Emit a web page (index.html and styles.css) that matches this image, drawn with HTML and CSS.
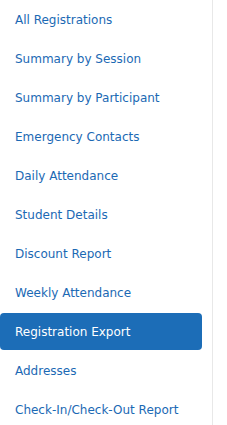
FILE: index.html
```html
<!DOCTYPE html>
<html lang="en">
<head>
    <meta charset="UTF-8">
    <meta name="viewport" content="width=device-width, initial-scale=1.0">
    <title>Reports</title>
    <link rel="stylesheet" href="styles.css">
</head>
<body>
    <aside class="side-nav">
        <ul class="report-list">
            <li><a href="#">All Registrations</a></li>
            <li><a href="#">Summary by Session</a></li>
            <li><a href="#">Summary by Participant</a></li>
            <li><a href="#">Emergency Contacts</a></li>
            <li><a href="#">Daily Attendance</a></li>
            <li><a href="#">Student Details</a></li>
            <li><a href="#">Discount Report</a></li>
            <li><a href="#">Weekly Attendance</a></li>
            <li><a href="#" class="active">Registration Export</a></li>
            <li><a href="#">Addresses</a></li>
            <li><a href="#">Check-In/Check-Out Report</a></li>
        </ul>
    </aside>
</body>
</html>
```

FILE: styles.css
```css
body{
    margin: 0;
    background-color: #ffffff;
    font-family: "DejaVu Sans", sans-serif;
}
.side-nav{
    width: 212px;
    height: 425px;
    border-right: 1px solid #e8e8e8;
    overflow: hidden;
}
.report-list{
    list-style: none;
    margin: 0;
    padding: 1px 10px 0 0;
    display: flex;
    flex-direction: column;
    gap: 2px;
}
.report-list a{
    display: flex;
    align-items: center;
    height: 37px;
    padding-left: 15px;
    font-size: 12px;
    color: #1b69b4;
    text-decoration: none;
    border-radius: 4px;
    white-space: nowrap;
}
.report-list a.active{
    background-color: #1c6db7;
    color: #ffffff;
}
```
